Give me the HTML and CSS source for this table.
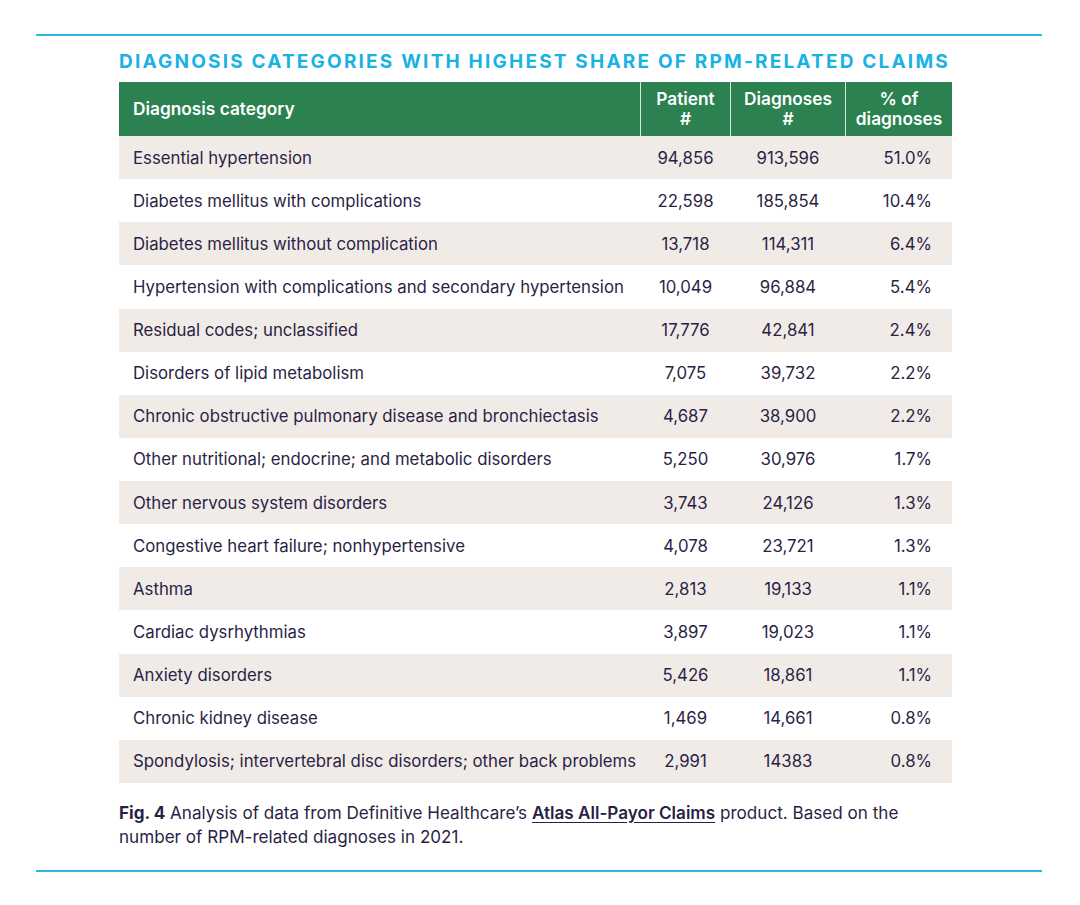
FILE: index.html
```html
<!DOCTYPE html>
<html>
<head>
<meta charset="utf-8">
<link rel="stylesheet" href="styles.css">
</head>
<body>
<div class="page">
  <div class="rule"></div>
  <div class="inner">
    <h1 class="title">DIAGNOSIS CATEGORIES WITH HIGHEST SHARE OF RPM-RELATED CLAIMS</h1>
    <table class="data">
      <thead>
        <tr>
          <th class="c-name">Diagnosis category</th>
          <th class="c-pat">Patient<br>#</th>
          <th class="c-diag">Diagnoses<br>#</th>
          <th class="c-pct">% of<br>diagnoses</th>
        </tr>
      </thead>
      <tbody>
        <tr><td class="c-name">Essential hypertension</td><td class="c-pat">94,856</td><td class="c-diag">913,596</td><td class="c-pct">51.0%</td></tr>
        <tr><td class="c-name">Diabetes mellitus with complications</td><td class="c-pat">22,598</td><td class="c-diag">185,854</td><td class="c-pct">10.4%</td></tr>
        <tr><td class="c-name">Diabetes mellitus without complication</td><td class="c-pat">13,718</td><td class="c-diag">114,311</td><td class="c-pct">6.4%</td></tr>
        <tr><td class="c-name">Hypertension with complications and secondary hypertension</td><td class="c-pat">10,049</td><td class="c-diag">96,884</td><td class="c-pct">5.4%</td></tr>
        <tr><td class="c-name">Residual codes; unclassified</td><td class="c-pat">17,776</td><td class="c-diag">42,841</td><td class="c-pct">2.4%</td></tr>
        <tr><td class="c-name">Disorders of lipid metabolism</td><td class="c-pat">7,075</td><td class="c-diag">39,732</td><td class="c-pct">2.2%</td></tr>
        <tr><td class="c-name">Chronic obstructive pulmonary disease and bronchiectasis</td><td class="c-pat">4,687</td><td class="c-diag">38,900</td><td class="c-pct">2.2%</td></tr>
        <tr><td class="c-name">Other nutritional; endocrine; and metabolic disorders</td><td class="c-pat">5,250</td><td class="c-diag">30,976</td><td class="c-pct">1.7%</td></tr>
        <tr><td class="c-name">Other nervous system disorders</td><td class="c-pat">3,743</td><td class="c-diag">24,126</td><td class="c-pct">1.3%</td></tr>
        <tr><td class="c-name">Congestive heart failure; nonhypertensive</td><td class="c-pat">4,078</td><td class="c-diag">23,721</td><td class="c-pct">1.3%</td></tr>
        <tr><td class="c-name">Asthma</td><td class="c-pat">2,813</td><td class="c-diag">19,133</td><td class="c-pct">1.1%</td></tr>
        <tr><td class="c-name">Cardiac dysrhythmias</td><td class="c-pat">3,897</td><td class="c-diag">19,023</td><td class="c-pct">1.1%</td></tr>
        <tr><td class="c-name">Anxiety disorders</td><td class="c-pat">5,426</td><td class="c-diag">18,861</td><td class="c-pct">1.1%</td></tr>
        <tr><td class="c-name">Chronic kidney disease</td><td class="c-pat">1,469</td><td class="c-diag">14,661</td><td class="c-pct">0.8%</td></tr>
        <tr><td class="c-name">Spondylosis; intervertebral disc disorders; other back problems</td><td class="c-pat">2,991</td><td class="c-diag">14383</td><td class="c-pct">0.8%</td></tr>
      </tbody>
    </table>
    <p class="caption"><b>Fig. 4</b> Analysis of data from Definitive Healthcare’s <a class="link">Atlas All-Payor Claims</a> product. Based on the number of RPM-related diagnoses in 2021.</p>
  </div>
  <div class="rule rule-bottom"></div>
</div>
</body>
</html>
```

FILE: styles.css
```css
html, body {
  margin: 0;
  padding: 0;
  background: #ffffff;
}

body {
  font-family: Inter, "Liberation Sans", sans-serif;
  color: #2a1f45;
}

.page {
  width: 1006px;
  margin-left: 36px;
  padding-top: 34px;
}

.rule {
  height: 2px;
  background: #2ab8e2;
}

.inner {
  padding-left: 83px;
  width: 832px;
}

.title {
  margin: 15px 0 0 0;
  height: 31px;
  font-size: 19px;
  line-height: 22px;
  font-weight: 700;
  letter-spacing: 2.2px;
  color: #19b2e3;
  white-space: nowrap;
}

.data {
  width: 830px;
  border-collapse: collapse;
  table-layout: fixed;
  font-size: 16.8px;
}

.data th {
  background: #2b8150;
  color: #ffffff;
  font-weight: 600;
  font-size: 17.3px;
  height: 54px;
  padding: 0;
  line-height: 20px;
  border-left: 1px solid #d9e9df;
  vertical-align: middle;
}

.data th.c-name {
  border-left: none;
  text-align: left;
  padding-left: 14px;
}

.data td {
  height: 43.13px;
  padding: 0;
  vertical-align: middle;
  line-height: 20px;
  white-space: nowrap;
}

.data tbody tr:nth-child(odd) td {
  background: #f1ebe8;
}

.c-name {
  width: 507px;
  padding-left: 14px !important;
  text-align: left;
}

.c-pat {
  width: 89px;
  text-align: center;
}

.c-diag {
  width: 114px;
  text-align: center;
}

.c-pct {
  width: 106px;
}

td.c-pct {
  text-align: right;
  padding-right: 20px !important;
}

th.c-pct {
  text-align: center;
}

.caption {
  margin: 18px 0 0 0;
  font-size: 17.1px;
  line-height: 24px;
  height: 69px;
}

.caption b {
  font-weight: 700;
}

.link {
  font-weight: 600;
  text-decoration: underline;
  text-underline-offset: 3px;
}
```
